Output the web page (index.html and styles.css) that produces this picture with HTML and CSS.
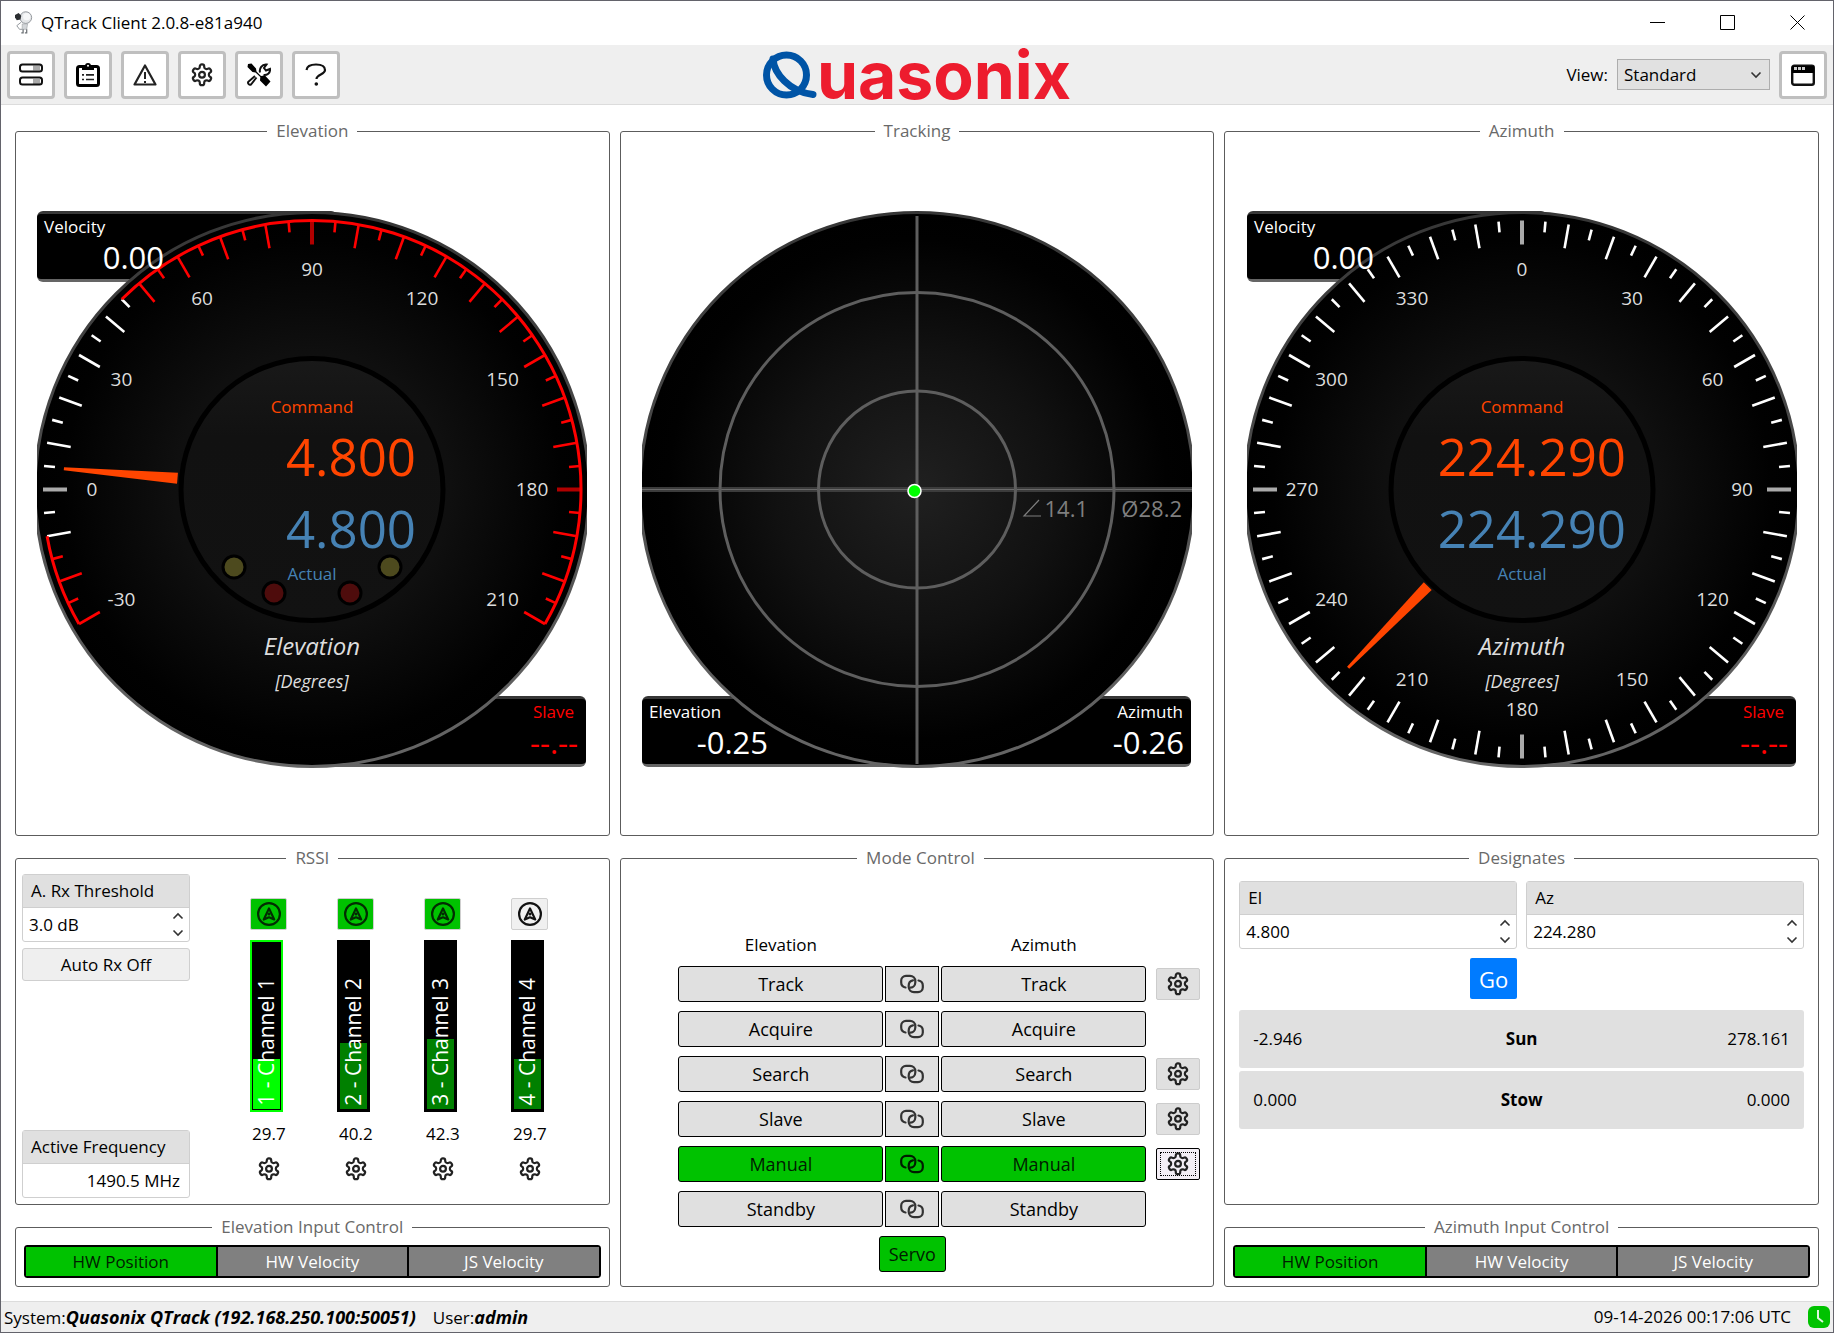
FILE: index.html
```html
<!DOCTYPE html>
<html lang="en">
<head>
<meta charset="utf-8">
<title>QTrack Client 2.0.8-e81a940</title>
<link rel="stylesheet" href="styles.css">
<script src="gauges.js" defer></script>
</head>
<body>
<svg class="sprite" aria-hidden="true">
  <defs>
    <radialGradient id="face"><stop offset="0" stop-color="#151515"/><stop offset=".5" stop-color="#0f0f0f"/><stop offset=".9" stop-color="#010101"/><stop offset="1" stop-color="#000"/></radialGradient>
    <radialGradient id="scope"><stop offset="0" stop-color="#202020"/><stop offset=".5" stop-color="#111"/><stop offset=".9" stop-color="#010101"/><stop offset="1" stop-color="#000"/></radialGradient>
    <linearGradient id="rim" x2="0" y2="1"><stop offset="0" stop-color="#363636"/><stop offset="1" stop-color="#666"/></linearGradient>
    <linearGradient id="hub" x2="0" y2="1"><stop offset="0" stop-color="#191919"/><stop offset=".3" stop-color="#111"/><stop offset="1" stop-color="#121212"/></linearGradient>
  </defs>
  <symbol id="gear" viewBox="0 0 24 24"><g fill="none" stroke="currentColor" stroke-width="2.2" stroke-linejoin="round"><path d="M12.22 1.4h-.44a2 2 0 0 0-2 2v.5a2 2 0 0 1-1 1.73l-.43.25a2 2 0 0 1-2 0l-.15-.08a2 2 0 0 0-2.73.73l-.22.38a2 2 0 0 0 .73 2.73l.15.1a2 2 0 0 1 1 1.72v.51a2 2 0 0 1-1 1.74l-.15.09a2 2 0 0 0-.73 2.73l.22.38a2 2 0 0 0 2.73.73l.15-.08a2 2 0 0 1 2 0l.43.25a2 2 0 0 1 1 1.73v.6a2 2 0 0 0 2 2h.44a2 2 0 0 0 2-2v-.6a2 2 0 0 1 1-1.73l.43-.25a2 2 0 0 1 2 0l.15.08a2 2 0 0 0 2.73-.73l.22-.39a2 2 0 0 0-.73-2.73l-.15-.08a2 2 0 0 1-1-1.74v-.5a2 2 0 0 1 1-1.74l.15-.09a2 2 0 0 0 .73-2.73l-.22-.38a2 2 0 0 0-2.73-.73l-.15.08a2 2 0 0 1-2 0l-.43-.25a2 2 0 0 1-1-1.73v-.5a2 2 0 0 0-2-2z"/><circle cx="12" cy="11.8" r="2.9"/></g></symbol>
  <symbol id="link" viewBox="0 0 24 24"><g fill="none" stroke="currentColor" stroke-width="2.2" stroke-linecap="round"><path d="M5.500 15.500C3 15 1.200 13 1.200 10.500V8.500A4.800 4.800 0 0 1 6 3.800h4A5.300 5.300 0 0 1 15.300 9v1.500a5.300 5.300 0 0 1-4.800 5.200"/><path d="M18.500 8.500c2.500.5 4.300 2.500 4.300 5v2a4.800 4.800 0 0 1-4.800 4.700h-4A5.300 5.300 0 0 1 8.700 15v-1.500a5.300 5.300 0 0 1 4.300-5.200"/></g></symbol>
  <symbol id="auto" viewBox="0 0 24 24"><circle cx="12" cy="12" r="10.900" fill="none" stroke="currentColor" stroke-width="2.200"/><path d="M6.800 17.500 12 6.400l5.200 11.100-5.200-2.200z" fill="none" stroke="currentColor" stroke-width="2.200" stroke-linejoin="round"/><circle cx="12" cy="12" r="1.500" fill="currentColor"/></symbol>
  <symbol id="up" viewBox="0 0 12 8"><path d="M1.500 6.500 6 2l4.500 4.500" fill="none" stroke="#333" stroke-width="1.600"/></symbol>
  <symbol id="down" viewBox="0 0 12 8"><path d="M1.500 1.500 6 6l4.500-4.500" fill="none" stroke="#333" stroke-width="1.600"/></symbol>
</svg>

<header class="titlebar">
  <svg class="app-icon" viewBox="0 0 20 26" aria-hidden="true">
    <circle cx="12" cy="7" r="6.500" fill="#e4e6e8" stroke="#8a8f94"/><circle cx="13" cy="6" r="4" fill="#f6f7f8"/>
    <path d="M0 4l4-2 3 3-1 4-4 1-2-3z" fill="#2b2e31"/><path d="M7 12 2 16l3 4 3 0" fill="none" stroke="#8a8f94"/>
    <path d="M8 14h6l-1 6H8z" fill="#d3d6d9" stroke="#a0a4a8" stroke-width=".7"/><path d="M9 20v4H7M13 20v4h-2" fill="none" stroke="#6d7276" stroke-width="1.400"/>
  </svg>
  <h1 class="app-title">QTrack Client 2.0.8-e81a940</h1>
  <div class="window-buttons">
    <button type="button" aria-label="Minimize"><svg viewBox="0 0 16 16"><path d="M0 7.500h15" stroke="#000"/></svg></button>
    <button type="button" aria-label="Maximize"><svg viewBox="0 0 16 16"><path d="M.5.5h14v14H.5z" fill="none" stroke="#000"/></svg></button>
    <button type="button" aria-label="Close"><svg viewBox="0 0 16 16"><path d="M.5.5l14 14M14.500.5l-14 14" stroke="#000"/></svg></button>
  </div>
</header>

<nav class="toolbar" aria-label="Main">
  <div class="tools">
    <button class="tool" type="button" aria-label="Systems"><svg viewBox="0 0 24 24"><path d="M14 2.500h7v5h-7zM14 16h7v5h-7z" fill="#aaa"/><g fill="none" stroke="#111" stroke-width="2"><rect x="1" y="1.500" width="22" height="7" rx="2.500"/><rect x="1" y="14.500" width="22" height="7" rx="2.500"/></g></svg></button>
    <button class="tool" type="button" aria-label="Log"><svg viewBox="0 0 24 24"><rect x="1.500" y="3.500" width="21" height="19" rx="2" fill="none" stroke="#000" stroke-width="3"/><path d="M6 3h3a3 3 0 0 1 6 0h3v4H6z" fill="#000"/><circle cx="12" cy="2.800" r="1" fill="#fff"/><path d="M6 11.800h2m2 0h8M6 16.500h2m2 0h8" stroke="#222" stroke-width="1.700"/></svg></button>
    <button class="tool" type="button" aria-label="Alerts"><svg viewBox="0 0 24 24"><path d="M12 2.500 22.500 21.500h-21z" fill="none" stroke="#222" stroke-width="2.200" stroke-linejoin="round"/><path d="M12 9v7m0 2v2" stroke="#222" stroke-width="2"/></svg></button>
    <button class="tool" type="button" aria-label="Settings"><svg><use href="#gear"/></svg></button>
    <button class="tool" type="button" aria-label="Maintenance"><svg viewBox="0 0 24 24"><path d="M1 1 4.500.5 9 5.500l.5 3 4.500 4.500 4-.5 5.500 6-4.500 5-6-6 .3-3.500L8.500 9.500 5.500 9 .5 4z" fill="#000"/><path d="M9.500 14.500 4 21.500a2 2 0 0 1-2.700-2.700L8 13M13 9.500c-1-4 2-8.500 6.500-8L17 5l2 2.500 4-1.500c.5 4-3 6.500-6.500 6" fill="none" stroke="#111" stroke-width="2"/></svg></button>
    <button class="tool" type="button" aria-label="Help"><svg viewBox="0 0 24 24"><path d="M2.500 7C3 3 7 1.500 12 1.500c5.500 0 9 2 9 5.500 0 4.500-8.500 4.500-8.500 9" fill="none" stroke="#111" stroke-width="2.200"/><circle cx="12.300" cy="21" r="1.800" fill="#111"/></svg></button>
  </div>
  <div class="logo" role="img" aria-label="Quasonix">
    <svg viewBox="0 0 54 48"><circle cx="23.500" cy="24" r="20" fill="none" stroke="#0054a6" stroke-width="7"/><path d="M10 8C11 22 26 41 50 43.500" fill="none" stroke="#0054a6" stroke-width="7" stroke-linecap="round"/></svg>
    <span>uasonix</span>
  </div>
  <div class="view">
    <label for="view">View:</label>
    <span class="select"><select id="view"><option>Standard</option></select><svg viewBox="0 0 12 8"><use href="#down"/></svg></span>
    <button class="tool" type="button" aria-label="Window"><svg viewBox="0 0 24 24"><rect x="1.200" y="2.700" width="21.600" height="19" rx="2" fill="none" stroke="#111" stroke-width="2.400"/><path d="M1 3h22v7H1z"/><path d="M3 5.500h3m1 0h3m1 0h3" stroke="#ccc" stroke-width="3"/></svg></button>
  </div>
</nav>

<main class="panels">
  <fieldset class="panel dial">
    <legend>Elevation</legend>
    <svg class="gauge" viewBox="0 0 550 557" role="img" aria-label="Elevation gauge" data-start="-30" data-end="210" data-rotate="0" data-red="-30,-10,45,210">
      <rect x="0" y="0" width="300" height="71" rx="6" fill="url(#rim)"/><rect x="0" y="3" width="300" height="65" rx="4"/>
      <rect x="260" y="485" width="289" height="71" rx="6" fill="url(#rim)"/><rect x="260" y="488" width="289" height="65" rx="4"/>
      <circle cx="275" cy="278.500" r="277" fill="url(#face)" stroke="url(#rim)" stroke-width="3"/>
      <g class="scale"></g>
      <circle cx="275" cy="278.500" r="131" fill="url(#hub)" stroke="#000" stroke-width="5"/>
      <path d="M26 277 140 273v11L26 280z" fill="#ff4500" transform="rotate(4.800 275 278.500)"/>
      <g stroke="#000" stroke-width="3"><circle cx="197" cy="356" r="11" fill="#4d4a1e"/><circle cx="353" cy="356" r="11" fill="#4d4a1e"/><circle cx="237" cy="382" r="11" fill="#4e0c0c"/><circle cx="313" cy="382" r="11" fill="#4e0c0c"/></g>
      <g class="mid">
        <text class="command t17" x="275" y="202">Command</text><text class="command big" x="379" y="265">4.800</text>
        <text class="actual big" x="379" y="337">4.800</text><text class="actual t17" x="275" y="369">Actual</text>
        <text class="name" x="275" y="444">Elevation</text><text class="unit" x="275" y="477">[Degrees]</text>
      </g>
      <text class="t17" x="7" y="22">Velocity</text><text class="reading" x="127" y="58">0.00</text>
      <text class="slave t17 end" x="537" y="507">Slave</text><text class="slave reading" x="541" y="543">--.--</text>
    </svg>
  </fieldset>

  <fieldset class="panel dial">
    <legend>Tracking</legend>
    <svg class="gauge" viewBox="0 0 550 557" role="img" aria-label="Tracking scope">
      <rect x="0" y="485" width="549" height="71" rx="6" fill="url(#rim)"/><rect x="0" y="488" width="549" height="65" rx="4"/>
      <circle cx="275" cy="278.500" r="277" fill="url(#scope)" stroke="url(#rim)" stroke-width="3"/>
      <path d="M0 278.500h550" stroke="#3c3c3c" stroke-width="5"/><path d="M0 278.500h550" stroke="#6a6a6a"/>
      <g fill="none" stroke="#5e5e5e" stroke-width="3"><circle cx="275" cy="278.500" r="98.500"/><circle cx="275" cy="278.500" r="197"/><path d="M275 5v548"/></g>
      <circle cx="272.500" cy="280" r="6.500" fill="#0f0" stroke="#fff" stroke-width="1.500"/>
      <path d="M397 289l-15 16h17" fill="none" stroke="#7f7f7f" stroke-width="1.200"/>
      <text class="range" x="446" y="306">14.1</text><text class="range" x="540" y="306">Ø28.2</text>
      <text class="t17" x="7" y="507">Elevation</text><text class="reading" x="126" y="543">-0.25</text>
      <text class="t17 end" x="541" y="507">Azimuth</text><text class="reading" x="542" y="543">-0.26</text>
    </svg>
  </fieldset>

  <fieldset class="panel dial">
    <legend>Azimuth</legend>
    <svg class="gauge" viewBox="0 0 550 557" role="img" aria-label="Azimuth gauge" data-start="0" data-end="355" data-rotate="90" data-red="">
      <rect x="0" y="0" width="300" height="71" rx="6" fill="url(#rim)"/><rect x="0" y="3" width="300" height="65" rx="4"/>
      <rect x="260" y="485" width="289" height="71" rx="6" fill="url(#rim)"/><rect x="260" y="488" width="289" height="65" rx="4"/>
      <circle cx="275" cy="278.500" r="277" fill="url(#face)" stroke="url(#rim)" stroke-width="3"/>
      <g class="scale"></g>
      <circle cx="275" cy="278.500" r="131" fill="url(#hub)" stroke="#000" stroke-width="5"/>
      <path d="M26 277 140 273v11L26 280z" fill="#ff4500" transform="rotate(314.290 275 278.500)"/>
      <g class="mid">
        <text class="command t17" x="275" y="202">Command</text><text class="command big" x="379" y="265">224.290</text>
        <text class="actual big" x="379" y="337">224.290</text><text class="actual t17" x="275" y="369">Actual</text>
        <text class="name" x="275" y="444">Azimuth</text><text class="unit" x="275" y="477">[Degrees]</text>
      </g>
      <text class="t17" x="7" y="22">Velocity</text><text class="reading" x="127" y="58">0.00</text>
      <text class="slave t17 end" x="537" y="507">Slave</text><text class="slave reading" x="541" y="543">--.--</text>
    </svg>
  </fieldset>

  <fieldset class="panel rssi">
    <legend>RSSI</legend>
    <div class="rssi-side">
      <div>
        <div class="field">
          <label for="threshold">A. Rx Threshold</label>
          <div class="spin"><input id="threshold" type="text" value="3.0 dB"><span class="steps"><button type="button" aria-label="Increase threshold"><svg><use href="#up"/></svg></button><button type="button" aria-label="Decrease threshold"><svg><use href="#down"/></svg></button></span></div>
        </div>
        <button class="auto-rx" type="button">Auto Rx Off</button>
      </div>
      <div class="field">
        <label for="frequency">Active Frequency</label>
        <div class="spin"><input id="frequency" class="right" type="text" value="1490.5 MHz" readonly></div>
      </div>
    </div>
    <div class="channels">
      <div class="channel active">
        <button class="auto on" type="button" aria-label="Auto channel 1"><svg><use href="#auto"/></svg></button>
        <div class="bar"><i style="height:30%"></i><span>1 - Channel 1</span></div>
        <output>29.7</output>
        <button class="plain" type="button" aria-label="Channel 1 settings"><svg><use href="#gear"/></svg></button>
      </div>
      <div class="channel">
        <button class="auto on" type="button" aria-label="Auto channel 2"><svg><use href="#auto"/></svg></button>
        <div class="bar"><i style="height:40%"></i><span>2 - Channel 2</span></div>
        <output>40.2</output>
        <button class="plain" type="button" aria-label="Channel 2 settings"><svg><use href="#gear"/></svg></button>
      </div>
      <div class="channel">
        <button class="auto on" type="button" aria-label="Auto channel 3"><svg><use href="#auto"/></svg></button>
        <div class="bar"><i style="height:42%"></i><span>3 - Channel 3</span></div>
        <output>42.3</output>
        <button class="plain" type="button" aria-label="Channel 3 settings"><svg><use href="#gear"/></svg></button>
      </div>
      <div class="channel">
        <button class="auto" type="button" aria-label="Auto channel 4"><svg><use href="#auto"/></svg></button>
        <div class="bar"><i style="height:30%"></i><span>4 - Channel 4</span></div>
        <output>29.7</output>
        <button class="plain" type="button" aria-label="Channel 4 settings"><svg><use href="#gear"/></svg></button>
      </div>
    </div>
  </fieldset>

  <fieldset class="panel modes">
    <legend>Mode Control</legend>
    <div class="mode-grid">
      <div class="mode-head"><span>Elevation</span><span></span><span>Azimuth</span></div>
      <div class="mode-row"><button class="mode" type="button">Track</button><button class="mode join" type="button" aria-label="Track both"><svg><use href="#link"/></svg></button><button class="mode" type="button">Track</button><button class="config" type="button" aria-label="Track settings"><svg><use href="#gear"/></svg></button></div>
      <div class="mode-row"><button class="mode" type="button">Acquire</button><button class="mode join" type="button" aria-label="Acquire both"><svg><use href="#link"/></svg></button><button class="mode" type="button">Acquire</button></div>
      <div class="mode-row"><button class="mode" type="button">Search</button><button class="mode join" type="button" aria-label="Search both"><svg><use href="#link"/></svg></button><button class="mode" type="button">Search</button><button class="config" type="button" aria-label="Search settings"><svg><use href="#gear"/></svg></button></div>
      <div class="mode-row"><button class="mode" type="button">Slave</button><button class="mode join" type="button" aria-label="Slave both"><svg><use href="#link"/></svg></button><button class="mode" type="button">Slave</button><button class="config" type="button" aria-label="Slave settings"><svg><use href="#gear"/></svg></button></div>
      <div class="mode-row selected"><button class="mode" type="button">Manual</button><button class="mode join" type="button" aria-label="Manual both"><svg><use href="#link"/></svg></button><button class="mode" type="button">Manual</button><button class="config focused" type="button" aria-label="Manual settings"><svg><use href="#gear"/></svg></button></div>
      <div class="mode-row"><button class="mode" type="button">Standby</button><button class="mode join" type="button" aria-label="Standby both"><svg><use href="#link"/></svg></button><button class="mode" type="button">Standby</button></div>
      <div class="mode-row selected"><button class="mode servo" type="button">Servo</button></div>
    </div>
  </fieldset>

  <fieldset class="panel designates">
    <legend>Designates</legend>
    <div class="targets">
      <div class="field">
        <label for="el">El</label>
        <div class="spin"><input id="el" type="text" value="4.800"><span class="steps"><button type="button" aria-label="Increase elevation"><svg><use href="#up"/></svg></button><button type="button" aria-label="Decrease elevation"><svg><use href="#down"/></svg></button></span></div>
      </div>
      <div class="field">
        <label for="az">Az</label>
        <div class="spin"><input id="az" type="text" value="224.280"><span class="steps"><button type="button" aria-label="Increase azimuth"><svg><use href="#up"/></svg></button><button type="button" aria-label="Decrease azimuth"><svg><use href="#down"/></svg></button></span></div>
      </div>
      <button class="go" type="button">Go</button>
    </div>
    <div class="presets">
      <button class="preset" type="button"><span>-2.946</span><b>Sun</b><span>278.161</span></button>
      <button class="preset" type="button"><span>0.000</span><b>Stow</b><span>0.000</span></button>
    </div>
  </fieldset>

  <fieldset class="panel input-control">
    <legend>Elevation Input Control</legend>
    <div class="segments"><button class="current" type="button">HW Position</button><button type="button">HW Velocity</button><button type="button">JS Velocity</button></div>
  </fieldset>

  <fieldset class="panel input-control">
    <legend>Azimuth Input Control</legend>
    <div class="segments"><button class="current" type="button">HW Position</button><button type="button">HW Velocity</button><button type="button">JS Velocity</button></div>
  </fieldset>
</main>

<footer class="status">
  <span>System:<em>Quasonix QTrack (192.168.250.100:50051)</em></span>
  <span>User:<em>admin</em></span>
  <time class="clock" datetime="2026-09-14T00:17:06Z">09-14-2026 00:17:06 UTC</time>
  <svg viewBox="0 0 22 22" aria-hidden="true"><rect width="22" height="22" rx="6" fill="#00c200"/><path d="M10 4v8l5 4" fill="none" stroke="#dff5df" stroke-width="2"/></svg>
</footer>
</body>
</html>
```
FILE: gauges.js
```js
// Draws the tick marks, limit arcs and numbers of each round gauge.
const NS = 'http://www.w3.org/2000/svg';
const CX = 275, CY = 278.5, R = 269;

function point(angle, radius) {
  const a = (180 + angle) * Math.PI / 180;
  return [CX + radius * Math.cos(a), CY + radius * Math.sin(a)];
}

function add(parent, tag, attrs, text) {
  const el = document.createElementNS(NS, tag);
  for (const key in attrs) el.setAttribute(key, attrs[key]);
  if (text !== undefined) el.textContent = text;
  parent.append(el);
}

document.querySelectorAll('.gauge[data-start]').forEach((gauge) => {
  const scale = gauge.querySelector('.scale');
  const start = +gauge.dataset.start, end = +gauge.dataset.end;
  const turn = +gauge.dataset.rotate;
  const red = gauge.dataset.red ? gauge.dataset.red.split(',').map(Number) : [];
  const limited = (v) => red.length > 0 && ((v >= red[0] && v < red[1]) || (v > red[2] && v <= red[3]));

  for (let v = start; v <= end; v += 5) {
    const angle = v + turn;
    const long = v % 10 === 0;
    const [x1, y1] = point(angle, R);
    const [x2, y2] = point(angle, R - (long ? 24 : 11));
    const square = v % 90 === 0;
    const color = limited(v) ? (square ? '#b00000' : '#f00') : (square ? '#aaa' : '#fff');
    add(scale, 'line', { x1, y1, x2, y2, stroke: color, 'stroke-width': square ? 4 : 2.6 });
    if (v % 30 === 0) {
      const [x, y] = point(angle, 220);
      add(scale, 'text', { x, y: y + 6, class: 'number' }, v);
    }
  }
  for (let i = 0; i < red.length; i += 2) {
    const [x1, y1] = point(red[i] + turn, R);
    const [x2, y2] = point(red[i + 1] + turn, R);
    add(scale, 'path', { d: `M${x1} ${y1}A${R} ${R} 0 0 1 ${x2} ${y2}`, class: 'limit' });
  }
});
```
FILE: styles.css
```css
* { box-sizing: border-box; }

body {
  margin: 0;
  min-height: 100vh;
  display: flex;
  flex-direction: column;
  border: 1px solid #63636b;
  background: #fff;
  color: #000;
  font: 17px/24px "Open Sans", "Noto Sans", sans-serif;
}

button, input, select { font: inherit; color: inherit; margin: 0; }
button { padding: 0; display: flex; align-items: center; justify-content: center; }
svg { display: block; }
.sprite { position: absolute; width: 0; height: 0; }

/* Title bar */
.titlebar { display: flex; align-items: center; height: 44px; padding-left: 14px; }
.app-icon { width: 18px; height: 26px; }
.app-title { margin: 0 0 0 8px; font-size: 17px; font-weight: 400; flex: 1; }
.window-buttons { display: flex; }
.window-buttons button { width: 70px; height: 44px; border: 0; background: none; }
.window-buttons svg { width: 16px; height: 16px; }

/* Toolbar */
.toolbar {
  display: grid;
  grid-template-columns: 1fr auto 1fr;
  align-items: center;
  height: 60px;
  padding: 0 6px;
  background: #efefef;
  border-bottom: 1px solid #dcdcdc;
}
.tools { display: flex; gap: 9px; }
.tool { width: 48px; height: 48px; border: 3px solid #bfbfbf; border-radius: 4px; background: #fff; color: #222; }
.tool svg { width: 24px; height: 24px; }
.logo { display: flex; align-items: center; height: 48px; color: #ed1c2e; font: 700 66px/48px Inter, sans-serif; }
.logo svg { width: 54px; height: 48px; }
.view { display: flex; align-items: center; justify-content: flex-end; gap: 9px; }
.select { display: flex; align-items: center; position: relative; }
.select select { width: 153px; height: 31px; padding: 0 6px; border: 1px solid #adadad; border-radius: 0; background: #e1e1e1; appearance: none; }
.select svg { position: absolute; right: 8px; width: 12px; height: 8px; pointer-events: none; }

/* Panels */
.panels {
  flex: 1;
  display: grid;
  grid-template-columns: repeat(3, minmax(0, 1fr));
  grid-template-rows: 1fr auto auto;
  gap: 10px;
  padding: 14px;
}
.panel { min-width: 0; margin: 0; padding: 0; border: 1px solid #5c5c5c; border-radius: 3px; }
.panel > legend { margin: 0 auto; padding: 0 9px; color: #696969; }

.dial { display: flex; align-items: center; justify-content: center; padding: 0 21px; }
.gauge { width: 100%; max-width: 550px; height: auto; fill: #000; overflow: hidden; }
.gauge text { fill: #fff; }
.gauge .t17 { font-size: 17px; }
.gauge .reading { font-size: 31px; text-anchor: end; }
.gauge .end { text-anchor: end; }
.gauge .mid text { text-anchor: middle; }
.gauge .mid .big { font-size: 51px; text-anchor: end; }
.gauge .mid .command { fill: #ff4500; }
.gauge .mid .actual { fill: #4682b4; }
.gauge .slave { fill: #f00; }
.gauge .name { font-size: 24px; font-style: italic; fill: #ddd; }
.gauge .unit { font-size: 18px; font-style: italic; fill: #ddd; }
.gauge .number { font-size: 19px; text-anchor: middle; fill: #ddd; }
.gauge .range { font-size: 22px; text-anchor: end; fill: #7f7f7f; }
.gauge .limit { fill: none; stroke: #f00; stroke-width: 3; }

/* Labelled fields */
.field { border: 1px solid #cfcfcf; border-radius: 3px; }
.field label { display: block; padding: 4px 8px; background: #e0e0e0; border-bottom: 1px solid #cfcfcf; }
.spin { display: flex; height: 33px; }
.spin input { flex: 1; min-width: 0; width: 0; padding: 0 6px; border: 0; background: none; }
.spin .right { text-align: right; padding-right: 9px; }
.steps { display: flex; flex-direction: column; justify-content: space-between; padding: 3px 5px; }
.steps button { width: 12px; height: 10px; border: 0; background: none; }
.steps svg { width: 12px; height: 8px; }

/* RSSI */
.rssi { display: flex; padding: 4px 6px 6px; }
.rssi-side { display: flex; flex-direction: column; justify-content: space-between; width: 168px; }
.auto-rx { width: 100%; height: 33px; margin-top: 6px; border: 1px solid #cfcfcf; border-radius: 3px; background: #efefef; }
.channels { flex: 1; display: flex; justify-content: center; gap: 50px; padding: 24px 0 17px 6px; }
.channel { width: 37px; }
.auto { width: 37px; height: 32px; border: 1px solid #cfcfcf; border-radius: 2px; background: #f0f0f0; color: #111; }
.auto.on { background: #00c200; color: #022c02; }
.auto svg, .plain svg, .mode svg, .config svg { width: 24px; height: 24px; }
.bar { position: relative; width: 33px; height: 172px; margin: 10px 0; padding: 1px; background: #000; border: 2px solid #000; overflow: hidden; display: flex; align-items: flex-end; }
.bar i { width: 100%; background: #008000; }
.active .bar { border-color: #0f0; }
.active .bar i { background: #0f0; }
.bar span { position: absolute; left: 0; bottom: 4px; color: #fff; font-size: 21px; line-height: 28px; writing-mode: vertical-rl; transform: rotate(180deg); white-space: nowrap; }
.channel output { display: block; text-align: center; }
.plain { width: 37px; height: 24px; margin-top: 11px; border: 0; background: none; color: #222; }

/* Mode control */
.modes { grid-row: span 2; display: flex; align-items: flex-end; justify-content: flex-end; padding: 0 13px 14px 20px; }
.mode-grid { display: flex; flex-direction: column; gap: 9px; width: 522px; font-size: 18px; }
.mode-head, .mode-row { display: grid; grid-template-columns: 1fr 54px 1fr 52px; column-gap: 2px; align-items: center; }
.mode-head { text-align: center; font-size: 17px; }
.mode { height: 36px; border: 1px solid #000; border-radius: 3px; background: #e0e0e0; }
.join { border-radius: 0; color: #333; }
.config { justify-self: end; width: 44px; height: 32px; border: 1px solid #ccc; border-radius: 2px; background: #e0e0e0; color: #222; }
.focused { border-color: #000; background: #f3eef5; outline: 1px dotted #000; outline-offset: -5px; }
.selected .mode { background: #00c200; color: #001c00; }
.servo { grid-column: 2; justify-self: center; width: 67px; }

/* Designates */
.designates { padding: 11px 14px; }
.targets { display: grid; grid-template-columns: 1fr 1fr; gap: 9px; }
.go { justify-self: end; width: 47px; height: 41px; border: 0; border-radius: 2px; background: #007bff; color: #fff; font-size: 22px; }
.presets { display: flex; flex-direction: column; gap: 3px; margin-top: 11px; }
.preset { display: grid; grid-template-columns: 1fr auto 1fr; height: 58px; padding: 0 14px; border: 0; border-radius: 3px; background: #e0e0e0; text-align: left; }
.preset span:last-child { text-align: right; }

/* Input control */
.input-control { padding: 6px 8px 8px; }
.segments { display: grid; grid-template-columns: repeat(3, 1fr); height: 33px; border: 1px solid #000; border-radius: 3px; }
.segments button { border: 1px solid #000; background: #808080; color: #fff; }
.segments .current { background: #00c200; color: #001c00; }

/* Status bar */
.status { display: flex; align-items: center; height: 31px; padding: 0 3px; background: #efefef; border-top: 1px solid #dcdcdc; }
.status span { margin-right: 17px; }
.status em { font-size: 18px; font-weight: 700; }
.clock { margin-left: auto; }
.status svg { width: 22px; height: 22px; margin-left: 17px; }
```
